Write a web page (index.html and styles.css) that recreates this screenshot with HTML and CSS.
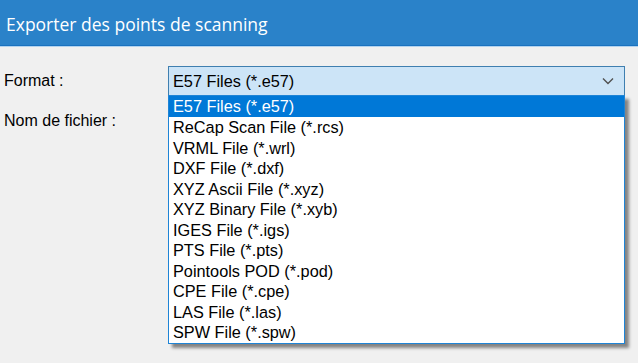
FILE: index.html
```html
<!DOCTYPE html>
<html lang="fr">
<head>
    <meta charset="UTF-8">
    <title>Exporter des points de scanning</title>
    <link rel="stylesheet" href="styles.css">
</head>
<body>
    <div class="titlebar">Exporter des points de scanning</div>

    <form class="dialog">
        <div class="field">
            <label for="format">Format :</label>
            <div class="combo" id="format">
                <span class="combo-value">E57 Files (*.e57)</span>
                <svg class="chevron" width="12" height="8" viewBox="0 0 12 8">
                    <path d="M1 1.5 L6 6.5 L11 1.5" fill="none" stroke="#505050" stroke-width="1.4"/>
                </svg>
                <ul class="combo-list">
                    <li class="selected">E57 Files (*.e57)</li>
                    <li>ReCap Scan File (*.rcs)</li>
                    <li>VRML File (*.wrl)</li>
                    <li>DXF File (*.dxf)</li>
                    <li>XYZ Ascii File (*.xyz)</li>
                    <li>XYZ Binary File (*.xyb)</li>
                    <li>IGES File (*.igs)</li>
                    <li>PTS File (*.pts)</li>
                    <li>Pointools POD (*.pod)</li>
                    <li>CPE File (*.cpe)</li>
                    <li>LAS File (*.las)</li>
                    <li>SPW File (*.spw)</li>
                </ul>
            </div>
        </div>

        <div class="field">
            <label for="filename">Nom de fichier :</label>
            <input type="text" id="filename" class="text-input">
        </div>
    </form>
</body>
</html>
```

FILE: styles.css
```css
body {
    margin: 0;
    background-color: #f0f0f0;
    font-family: "Open Sans", "Noto Sans", sans-serif;
    height: 363px;
    overflow: hidden;
}
.titlebar {
    height: 46px;
    box-sizing: border-box;
    padding: 12px 0 0 6px;
    background-color: #2a82c9;
    border-bottom: 1px solid #1a72bf;
    box-shadow: 0 1px 0 #b2d3ef;
    color: #ffffff;
    font-size: 17.5px;
}
.dialog {
    padding: 20px 13px 0 4px;
    display: flex;
    flex-direction: column;
    gap: 12px;
}
.field {
    display: flex;
    align-items: center;
}
label {
    width: 164px;
    font-family: "Liberation Sans", Arial, sans-serif;
    font-size: 16px;
    color: #000000;
}
.combo {
    position: relative;
    flex: 1;
    height: 30px;
    box-sizing: border-box;
    display: flex;
    align-items: center;
    padding: 0 10px 0 4px;
    background-color: #cce4f7;
    border: 1px solid #3f7fb0;
    font-family: "Liberation Sans", Arial, sans-serif;
    font-size: 16.3px;
}
.combo-value {
    flex: 1;
}
.combo-list {
    position: absolute;
    top: 28px;
    left: -1px;
    right: -1px;
    margin: 0;
    padding: 0;
    list-style: none;
    background-color: #ffffff;
    border: 1px solid #1e84d6;
    box-shadow: 4px 4px 3px rgba(0, 0, 0, 0.45);
    z-index: 2;
}
.combo-list li {
    height: 20.5px;
    line-height: 20.5px;
    padding-left: 4px;
}
.combo-list li.selected {
    height: 21px;
    line-height: 21px;
    background-color: #0078d7;
    color: #ffffff;
}
.text-input {
    flex: 1;
    height: 26px;
    box-sizing: border-box;
    border: 1px solid #7a7a7a;
    background-color: #ffffff;
}
```
